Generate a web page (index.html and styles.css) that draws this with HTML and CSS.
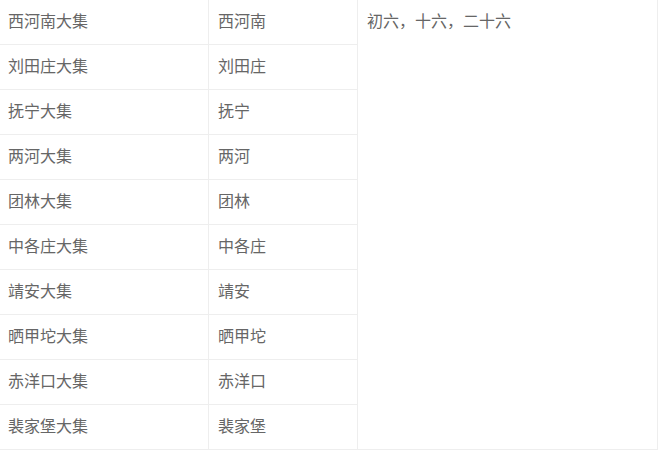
FILE: index.html
```html
<!DOCTYPE html>
<html lang="zh">
<head>
<meta charset="utf-8">
<link rel="stylesheet" href="styles.css">
</head>
<body>
<table class="market">
  <colgroup>
    <col class="c-name">
    <col class="c-place">
    <col class="c-date">
  </colgroup>
  <tbody>
    <tr><td>西河南大集</td><td>西河南</td><td class="date" rowspan="10">初六，十六，二十六</td></tr>
    <tr><td>刘田庄大集</td><td>刘田庄</td></tr>
    <tr><td>抚宁大集</td><td>抚宁</td></tr>
    <tr><td>两河大集</td><td>两河</td></tr>
    <tr><td>团林大集</td><td>团林</td></tr>
    <tr><td>中各庄大集</td><td>中各庄</td></tr>
    <tr><td>靖安大集</td><td>靖安</td></tr>
    <tr><td>晒甲坨大集</td><td>晒甲坨</td></tr>
    <tr><td>赤洋口大集</td><td>赤洋口</td></tr>
    <tr><td>裴家堡大集</td><td>裴家堡</td></tr>
  </tbody>
</table>
</body>
</html>
```
FILE: styles.css
```css
html, body {
  margin: 0;
  padding: 0;
  background: #ffffff;
}
body {
  font-family: "Noto Sans CJK SC", "Noto Sans", sans-serif;
  font-size: 16px;
  color: #666666;
}
.market {
  border-collapse: separate;
  border-spacing: 0;
  table-layout: fixed;
  width: 658px;
}
.c-name { width: 209px; }
.c-place { width: 149px; }
.c-date { width: 300px; }
.market td {
  box-sizing: border-box;
  padding: 0 0 0 8px;
  line-height: 40px;
  height: 45px;
  border-right: 1px solid #eeeeee;
  border-bottom: 1px solid #eeeeee;
  vertical-align: top;
  white-space: nowrap;
}
.market td + td {
  padding-left: 9px;
}
.market td.date {
  padding-left: 9px;
}
```
